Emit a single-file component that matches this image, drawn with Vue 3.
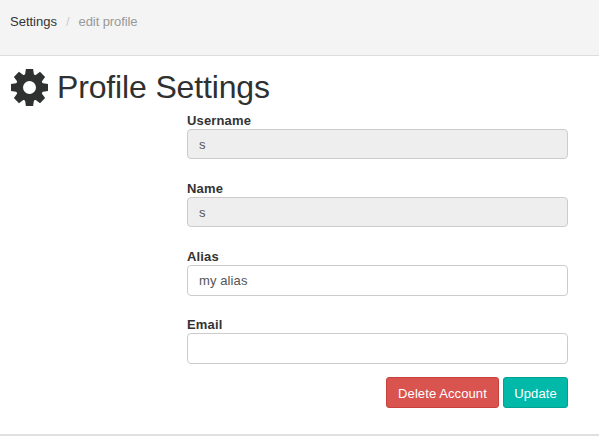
<script setup>
import { ref } from 'vue'

const fields = ref([
  { id: 'username', label: 'Username', value: 's', disabled: true },
  { id: 'name', label: 'Name', value: 's', disabled: true },
  { id: 'alias', label: 'Alias', value: 'my alias', disabled: false },
  { id: 'email', label: 'Email', value: '', disabled: false },
])
const teeth = [0, 45, 90, 135, 180, 225, 270, 315]
</script>

<template>
  <div class="page">
    <nav class="breadcrumb">
      <a class="crumb">Settings</a>
      <span class="sep">/</span>
      <span class="current">edit profile</span>
    </nav>
    <main class="content">
      <h1 class="title">
        <svg class="gear" viewBox="-19.5 -19.5 38 38" width="38" height="38">
          <path
            v-for="angle in teeth"
            :key="angle"
            :transform="`rotate(${angle})`"
            d="M-4.6 -12 L-3.6 -18.5 H3.6 L4.6 -12 Z"
          />
          <path
            fill-rule="evenodd"
            d="M0 -13.7 A13.7 13.7 0 1 1 0 13.7 A13.7 13.7 0 1 1 0 -13.7 Z M0 -6.5 A6.5 6.5 0 1 0 0 6.5 A6.5 6.5 0 1 0 0 -6.5 Z"
          />
        </svg>
        <span class="heading">Profile Settings</span>
      </h1>
      <form class="form" @submit.prevent>
        <div v-for="field in fields" :key="field.id" class="group">
          <label :for="field.id">{{ field.label }}</label>
          <input :id="field.id" v-model="field.value" type="text" :disabled="field.disabled" />
        </div>
        <div class="actions">
          <button type="button" class="btn danger">Delete Account</button>
          <button type="submit" class="btn primary">Update</button>
        </div>
      </form>
    </main>
  </div>
</template>

<style>
body {
  background: #fff;
}
</style>

<style scoped>
.page {
  box-sizing: border-box;
  height: 436px;
  overflow: hidden;
  font-family: "Liberation Sans", Arial, sans-serif;
  font-size: 13px;
  color: #333;
  display: flex;
  flex-direction: column;
}
.breadcrumb {
  box-sizing: border-box;
  flex: none;
  height: 56px;
  padding: 12px 10px;
  line-height: 20px;
  background: #f4f4f4;
  border-bottom: 1px solid #ddd;
  display: flex;
}
.sep {
  color: #ccc;
  padding: 0 9px;
}
.current {
  color: #999;
  letter-spacing: -0.1px;
}
.content {
  box-sizing: border-box;
  flex: none;
  height: 380px;
  padding: 12px 31px 0 10px;
  border-bottom: 2px solid #e0e0e0;
}
.title {
  display: flex;
  align-items: center;
  gap: 9px;
  height: 38px;
  margin: 0;
  font-size: 32px;
  font-weight: 400;
  line-height: 38px;
  color: #2f3131;
}
.heading {
  letter-spacing: -0.15px;
}
.gear {
  fill: #2f3131;
}
.form {
  margin: 5px 0 0 177px;
}
.group {
  height: 68px;
  display: flex;
  flex-direction: column;
}
label {
  height: 18px;
  line-height: 20px;
  font-weight: 700;
  letter-spacing: 0.15px;
}
input {
  box-sizing: border-box;
  width: 100%;
  height: 31px;
  margin: 0;
  padding: 5px 11px;
  font: inherit;
  letter-spacing: 0.1px;
  color: #555;
  background: #fff;
  border: 1px solid #ccc;
  border-radius: 4px;
}
input:disabled {
  height: 30px;
  background: #eee;
}
.actions {
  display: flex;
  justify-content: flex-end;
  gap: 4px;
  margin-top: -6px;
}
.btn {
  box-sizing: border-box;
  height: 31px;
  padding: 2px 0 0;
  font: inherit;
  letter-spacing: 0.1px;
  color: #fff;
  border: 1px solid;
  border-radius: 3px;
}
.danger {
  width: 113px;
  background: #d9534f;
  border-color: #c9413d;
}
.primary {
  width: 65px;
  background: #00b9a9;
  border-color: #00a092;
}
</style>
